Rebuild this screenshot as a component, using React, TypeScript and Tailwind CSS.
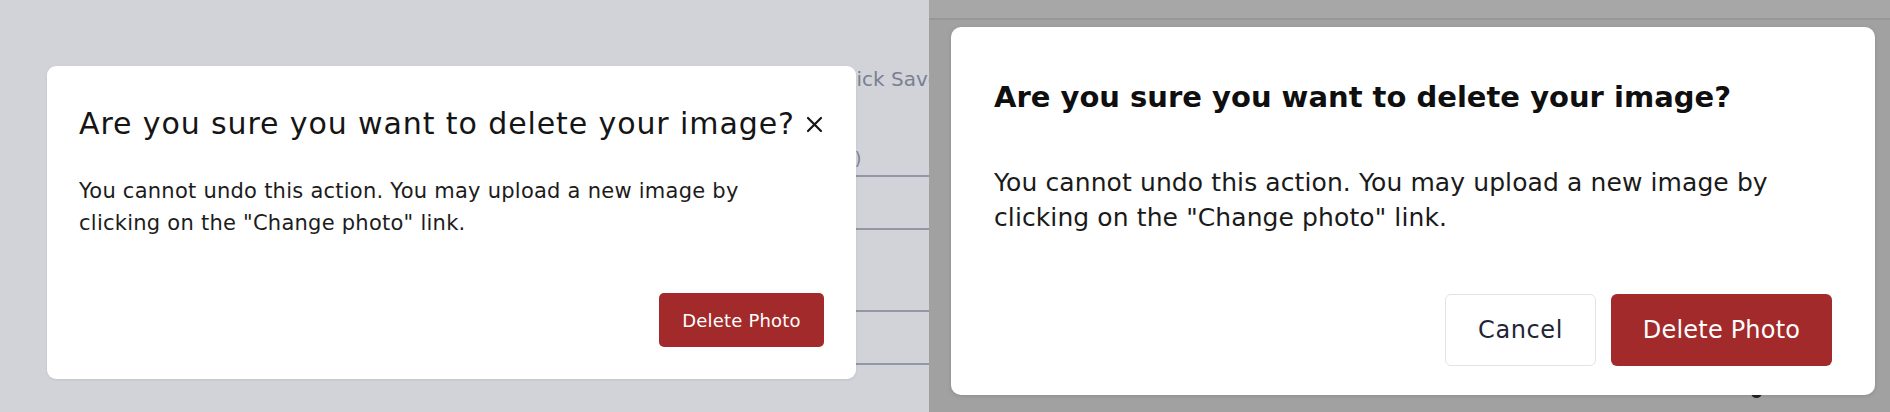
import React from "react";

const font = "font-['DejaVu_Sans',sans-serif]";

function LeftPanel() {
  return (
    <div className="relative w-[929px] h-[412px] shrink-0 overflow-hidden bg-[#d1d3d9]">
      {/* underlying page (behind overlay) */}
      <div className={`flex flex-col pl-[837px] w-[1100px] ${font}`}>
        <div className="h-[65px]" />
        <div className="h-[28px] leading-[28px] text-[20px] text-[#7a8091] whitespace-nowrap">Click Save</div>
        <div className="h-[84px] border-b-2 border-[#9197a6] pt-[56px]">
          <div className="leading-[20px] text-[17px] text-[#7a8091] whitespace-nowrap -ml-[21px]">(min)</div>
        </div>
        <div className="h-[53px] border-b-2 border-[#9197a6]" />
        <div className="h-[82px] border-b-2 border-[#9197a6]" />
        <div className="h-[53px] border-b-2 border-[#9197a6]" />
      </div>

      {/* modal */}
      <div className={`absolute left-[47px] top-[66px] w-[809px] h-[313px] bg-white rounded-[9px] shadow-[0_1px_3px_rgba(0,0,0,0.08)] px-8 pt-[40px] pb-8 flex flex-col ${font}`}>
        <div className="flex items-center justify-between h-[36px]">
          <h2 className="text-[30px] leading-[36px] tracking-[0.9px] text-[#151515] whitespace-nowrap font-normal">
            Are you sure you want to delete your image?
          </h2>
          <button className="w-[19px] h-[19px] flex items-center justify-center text-[#151515]" aria-label="Close">
            <svg width="17" height="17" viewBox="0 0 17 17" fill="none" stroke="currentColor" strokeWidth="2.2" strokeLinecap="round">
              <path d="M2 2 L15 15 M15 2 L2 15" />
            </svg>
          </button>
        </div>
        <p className="mt-[33px] text-[21px] leading-[32px] tracking-[0.25px] text-[#1c1c1c]">
          You cannot undo this action. You may upload a new image by clicking on the "Change photo" link.
        </p>
        <div className="mt-auto flex justify-end">
          <button className="w-[165px] h-[54px] rounded-[5px] bg-[#a32a2a] text-white text-[18px] tracking-[0.2px]">
            Delete Photo
          </button>
        </div>
      </div>
    </div>
  );
}

function RightPanel() {
  return (
    <div className="relative w-[961px] h-[412px] shrink-0 overflow-hidden bg-[#a1a1a1] flex flex-col">
      <div className="h-[18px] bg-[#a7a7a7]" />
      <div className="h-[2px] bg-[#979797]" />
      {/* peeking descender behind modal */}
      <div className="absolute left-[822px] top-[389px] w-[11px] h-[9px] rounded-b-full border-b-[3px] border-[#222]" />

      <div className={`absolute left-[22px] top-[27px] w-[924px] h-[368px] bg-white rounded-[10px] shadow-[0_1px_4px_rgba(0,0,0,0.12)] px-[43px] pt-[52px] pb-[29px] flex flex-col ${font}`}>
        <h2 className="text-[29px] leading-[36px] font-bold text-[#0f0f0f] whitespace-nowrap">
          Are you sure you want to delete your image?
        </h2>
        <p className="mt-[50px] text-[25px] leading-[35px] tracking-[0.1px] text-[#1a1a1a]">
          You cannot undo this action. You may upload a new image by clicking on the "Change photo" link.
        </p>
        <div className="mt-auto flex justify-end gap-[15px]">
          <button className="w-[151px] h-[72px] rounded-[6px] border border-[#e1e3e9] bg-white text-[#1f2535] text-[24px] tracking-[0.6px]">
            Cancel
          </button>
          <button className="w-[221px] h-[72px] rounded-[6px] bg-[#a32a2a] text-white text-[24px] tracking-[0.2px]">
            Delete Photo
          </button>
        </div>
      </div>
    </div>
  );
}

export default function App() {
  return (
    <div className="flex w-[1890px] h-[412px] overflow-hidden">
      <LeftPanel />
      <RightPanel />
    </div>
  );
}
